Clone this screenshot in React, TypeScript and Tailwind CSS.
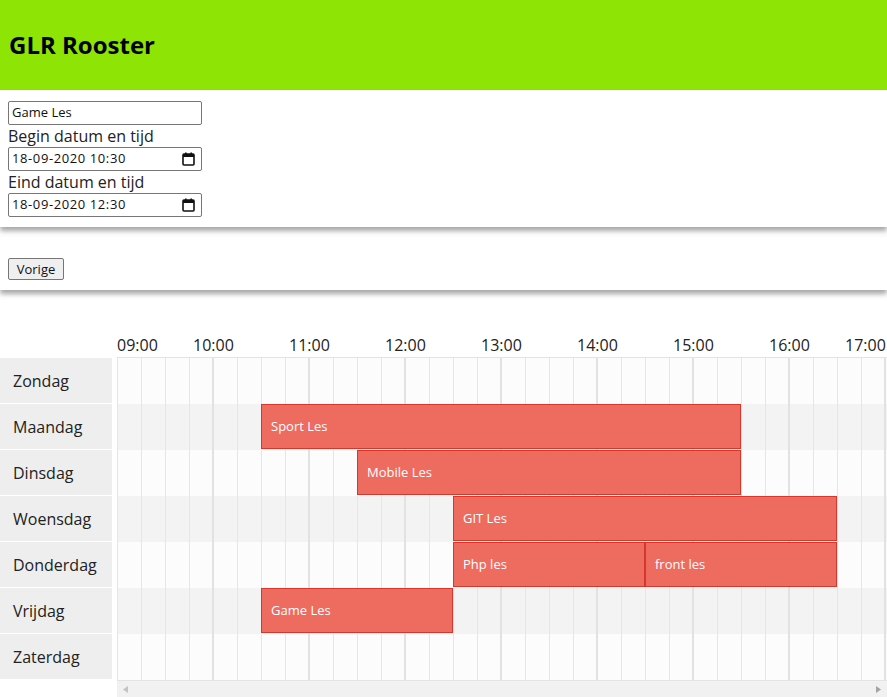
import React from 'react';

const days = ['Zondag', 'Maandag', 'Dinsdag', 'Woensdag', 'Donderdag', 'Vrijdag', 'Zaterdag'];

const lessons = [
  { day: 1, start: 10.5, end: 15.5, title: 'Sport Les' },
  { day: 2, start: 11.5, end: 15.5, title: 'Mobile Les' },
  { day: 3, start: 12.5, end: 16.5, title: 'GIT Les' },
  { day: 4, start: 12.5, end: 14.5, title: 'Php les' },
  { day: 4, start: 14.5, end: 16.5, title: 'front les' },
  { day: 5, start: 10.5, end: 12.5, title: 'Game Les' },
];

const HOUR = 96;
const hours = ['09:00', '10:00', '11:00', '12:00', '13:00', '14:00', '15:00', '16:00', '17:00'];

function CalendarIcon() {
  return (
    <svg width="13" height="14" viewBox="0 0 13 14" className="shrink-0">
      <rect x="1" y="2" width="11" height="11" fill="none" stroke="#111" strokeWidth="1.6" rx="1" />
      <rect x="1" y="2" width="11" height="3" fill="#111" />
      <rect x="3" y="0.5" width="1.6" height="2.5" fill="#111" />
      <rect x="8.4" y="0.5" width="1.6" height="2.5" fill="#111" />
    </svg>
  );
}

function DateField({ value }: { value: string }) {
  return (
    <div className="flex items-center justify-between w-[194px] h-[24px] border border-[#767676] rounded-[2px] pl-[3px] pr-[6px] text-[13px] text-[#111] bg-white">
      <span className="tracking-[0.6px]">{value}</span>
      <CalendarIcon />
    </div>
  );
}

export default function App() {
  return (
    <div className="w-[887px] h-[697px] overflow-hidden bg-white text-[#222]" style={{ fontFamily: '"Open Sans", "Liberation Sans", sans-serif' }}>
      <header className="h-[90px] bg-[#8ee505] flex items-center pl-[9px]">
        <h1 className="text-[24px] font-bold text-black">GLR Rooster</h1>
      </header>

      <div className="bg-white px-[8px] pt-[11px] pb-[10px] shadow-[0_4px_5px_rgba(0,0,0,0.35)] relative">
        <div className="flex items-center w-[194px] h-[24px] border border-[#767676] rounded-[2px] px-[3px] text-[13px] text-[#111]">Game Les</div>
        <div className="text-[16px] leading-[22px]">Begin datum en tijd</div>
        <DateField value="18-09-2020 10:30" />
        <div className="text-[16px] leading-[22px]">Eind datum en tijd</div>
        <DateField value="18-09-2020 12:30" />
      </div>

      <div className="mt-[10px] bg-white px-[8px] pt-[21px] pb-[10px] shadow-[0_4px_5px_rgba(0,0,0,0.35)] relative">
        <button className="h-[22px] w-[56px] border border-[#767676] rounded-[2px] bg-[#efefef] text-[13px] text-[#111] leading-none block">Vorige</button>
      </div>

      <div className="flex mt-[40px]">
        <div className="w-[112px] pt-[27px] shrink-0">
          {days.map((d) => (
            <div key={d} className="h-[46px] bg-[#eeeeee] border-t border-white first:border-t-0 first:h-[45px] first:mt-[1px] flex items-center pl-[13px] text-[16px] text-[#222]">
              {d}
            </div>
          ))}
        </div>

        <div className="ml-[5px] w-[770px] overflow-hidden">
          <div className="relative h-[27px] text-[16px] text-[#222]">
            {hours.map((h, i) => {
              const x = i * HOUR;
              let left = x - 20;
              if (i === 0) left = 0;
              if (i === hours.length - 1) left = 728;
              return (
                <span key={h} className="absolute top-[4px] leading-[22px]" style={{ left }}>
                  {h}
                </span>
              );
            })}
          </div>

          <div className="relative border-t border-[#e3e3e3]">
            {days.map((d, i) => (
              <div key={d} className={`h-[46px] ${i % 2 === 1 ? 'bg-[#f3f3f3]' : 'bg-[#fcfcfc]'}`} />
            ))}

            <div className="absolute inset-0">
              {Array.from({ length: 33 }).map((_, i) => {
                const isHour = i % 4 === 0 && i > 0;
                return (
                  <div
                    key={i}
                    className={`absolute top-0 bottom-0 ${isHour ? 'w-[2px] bg-[#e2e2e2]' : 'w-px bg-[#e6e6e6]'}`}
                    style={{ left: isHour ? i * 24 - 1 : i * 24 }}
                  />
                );
              })}
            </div>

            <div className="absolute inset-0">
              {lessons.map((l) => (
                <div
                  key={l.title}
                  className="absolute h-[45px] bg-[#ee6b60] border border-[#d8352b] flex items-center pl-[9px] text-[13px] text-white"
                  style={{ left: (l.start - 9) * HOUR, width: (l.end - l.start) * HOUR, top: l.day * 46 }}
                >
                  {l.title}
                </div>
              ))}
            </div>
          </div>

          <div className="h-[18px] bg-[#f1f1f1] border-t border-[#e3e3e3] flex items-center justify-between px-[6px]">
            <svg width="5" height="7" viewBox="0 0 5 7"><path d="M5 0 L0 3.5 L5 7 Z" fill="#c3c3c3" /></svg>
            <svg width="5" height="7" viewBox="0 0 5 7"><path d="M0 0 L5 3.5 L0 7 Z" fill="#a3a3a3" /></svg>
          </div>
        </div>
      </div>
    </div>
  );
}
